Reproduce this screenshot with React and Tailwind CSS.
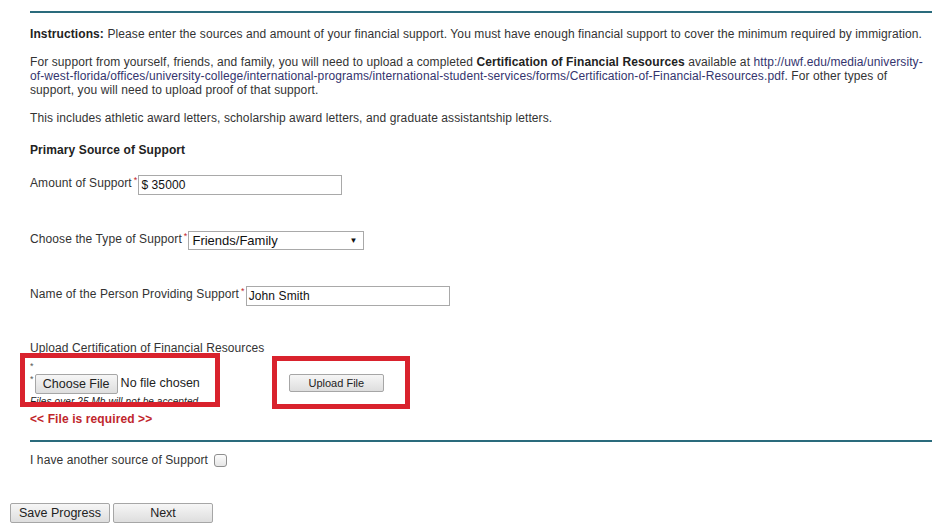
import React from "react";

const btn =
  "border border-[#a6a6a6] rounded-[2px] bg-gradient-to-b from-[#f6f6f6] to-[#dedede] text-[#222] flex items-center justify-center tracking-normal";

export default function App() {
  return (
    <div className="w-[946px] h-[528px] bg-white text-[#333] text-[12px] leading-[14px] tracking-[0.1px] overflow-hidden" style={{ fontFamily: '"Liberation Sans", Arial, sans-serif' }}>
      <div className="pl-[30px] pr-[14px] pt-[11px]">
        <div className="h-[2px] bg-[#2a6b7c]" />
        <p className="mt-[14px] whitespace-nowrap">
          <b className="text-[#222]">Instructions:</b> Please enter the sources and amount of your financial support. You must have enough financial support to cover the minimum required by immigration.
        </p>
        <p className="mt-[14px] whitespace-nowrap">
          For support from yourself, friends, and family, you will need to upload a completed <b className="text-[#222]">Certification of Financial Resources</b> available at <span className="text-[#34346e]">http://uwf.edu/media/university-</span>
          <br />
          <span className="text-[#34346e]">of-west-florida/offices/university-college/international-programs/international-student-services/forms/Certification-of-Financial-Resources.pdf</span>. For other types of
          <br />
          support, you will need to upload proof of that support.
        </p>
        <p className="mt-[14px]">This includes athletic award letters, scholarship award letters, and graduate assistantship letters.</p>
        <p className="mt-[18px] font-bold text-[#222]">Primary Source of Support</p>

        <div className="mt-[18px] flex items-start h-[20px]">
          <span className="mt-[1px]">Amount of Support</span>
          <span className="text-[#c0262b] text-[9px] leading-[10px] ml-[2px]">*</span>
          <div className="ml-[1px] w-[204px] h-[20px] border border-[#a9a9a9] flex items-center px-[2px] text-[12px] text-[#111]">$ 35000</div>
        </div>

        <div className="mt-[36px] flex items-start h-[19px]">
          <span className="mt-[1px]">Choose the Type of Support</span>
          <span className="text-[#c0262b] text-[9px] leading-[10px] ml-[2px]">*</span>
          <div className="ml-[1px] w-[176px] h-[19px] border border-[#a9a9a9] flex items-center justify-between pl-[3px] pr-[6px] text-[13px] tracking-normal text-[#111]">
            <span>Friends/Family</span>
            <span className="text-[8px]">▼</span>
          </div>
        </div>

        <div className="mt-[36px] flex items-start h-[20px]">
          <span className="mt-[1px]">Name of the Person Providing Support</span>
          <span className="text-[#c0262b] text-[9px] leading-[10px] ml-[2px]">*</span>
          <div className="ml-[1px] w-[204px] h-[20px] border border-[#a9a9a9] flex items-center px-[2px] text-[12px] text-[#111]">John Smith</div>
        </div>

        <div className="relative mt-[35px]">
          <p>Upload Certification of Financial Resources</p>
          <p className="text-[9px] leading-[10px] mt-[6px] text-[#555]">*</p>
          <div className="flex items-start mt-[3px]">
            <span className="text-[9px] leading-[10px] text-[#555]">*</span>
            <div className={`${btn} w-[83px] h-[20px] text-[12.5px] ml-[1px]`}>Choose File</div>
            <span className="ml-[3px] mt-[2px] text-[12.5px] tracking-normal text-[#222]">No file chosen</span>
            <div className={`${btn} w-[95px] h-[18px] text-[11px] ml-[89px]`}>Upload File</div>
          </div>
          <p className="italic text-[10px] leading-[12px] mt-[2px] text-[#222]">Files over 25 Mb will not be accepted.</p>
          <p className="mt-[4px] font-bold text-[#c0262b]">&lt;&lt; File is required &gt;&gt;</p>
          <div className="absolute left-[-10px] top-[12px] w-[200px] h-[54px] border-[5px] border-[#d9222d]" />
          <div className="absolute left-[242px] top-[15px] w-[138px] h-[53px] border-[5px] border-[#d9222d]" />
        </div>

        <div className="mt-[14px] h-[2px] bg-[#2a6b7c]" />
        <div className="mt-[10px] flex items-center">
          <span>I have another source of Support</span>
          <span className="ml-[6px] mt-[2px] w-[13px] h-[13px] rounded-[3px] border border-[#8f8f8f] bg-gradient-to-b from-[#fcfcfc] to-[#e6e6e6]" />
        </div>
      </div>

      <div className="flex gap-[3px] pl-[10px] mt-[36px]">
        <div className={`${btn} w-[100px] h-[20px] text-[12.5px]`}>Save Progress</div>
        <div className={`${btn} w-[100px] h-[20px] text-[12.5px]`}>Next</div>
      </div>
    </div>
  );
}
